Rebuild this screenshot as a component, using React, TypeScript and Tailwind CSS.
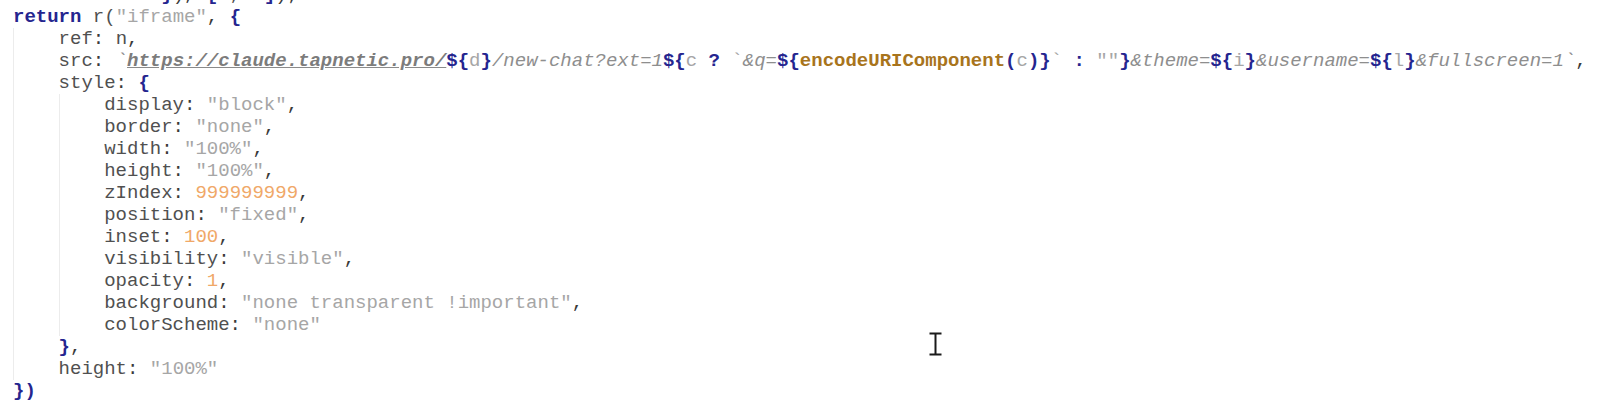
import React from "react";

const B = ({ children }: { children: React.ReactNode }) => (
  <span className="font-bold text-[#25258f]">{children}</span>
);
const I = ({ children }: { children: React.ReactNode }) => (
  <span className="text-[#505050]">{children}</span>
);
const S = ({ children }: { children: React.ReactNode }) => (
  <span className="text-[#a6a6a6]">{children}</span>
);
const N = ({ children }: { children: React.ReactNode }) => (
  <span className="text-[#f0a868]">{children}</span>
);
const T = ({ children }: { children: React.ReactNode }) => (
  <span className="italic text-[#8e8e8e]">{children}</span>
);
const C = ({ children }: { children: React.ReactNode }) => (
  <span className="text-[#3a3a3a]">{children}</span>
);

const Line = ({ children }: { children?: React.ReactNode }) => (
  <div className="h-[22px] whitespace-pre">{children}</div>
);

const Prop = ({ k, children }: { k: string; children: React.ReactNode }) => (
  <Line>
    <I>{k}</I>
    <C>: </C>
    {children}
    <C>,</C>
  </Line>
);

export default function App() {
  return (
    <div className="relative w-[1600px] h-[403px] overflow-hidden bg-white">
      <div
        className="mt-[-16px] pl-[13px] text-[19px] leading-[22px]"
        style={{ fontFamily: '"Liberation Mono", "Courier New", monospace' }}
      >
        <Line>
          <C>{"             "}</C>
          <B>{"}"}</B>
          <C>{"), "}</C>
          <B>{"["}</B>
          <I>d, c</I>
          <B>{"]"}</B>
          <C>{");"}</C>
        </Line>
        <Line>
          <B>return</B>
          <I> r(</I>
          <S>"iframe"</S>
          <C>, </C>
          <B>{"{"}</B>
        </Line>
        <div className="border-l border-[#ececec] pl-[44.6px]">
          <Prop k="ref">
            <I>n</I>
          </Prop>
          <Line>
            <I>src</I>
            <C>: </C>
            <T>`</T>
            <span className="italic font-bold underline text-[#7c7c7c] decoration-[#8a8a8a]">
              https://claude.tapnetic.pro/
            </span>
            <B>{"${"}</B>
            <S>d</S>
            <B>{"}"}</B>
            <T>/new-chat?ext=1</T>
            <B>{"${"}</B>
            <S>c</S>
            <B>{" ? "}</B>
            <S>`</S>
            <T>&q=</T>
            <B>{"${"}</B>
            <span className="font-bold text-[#a8741c]">encodeURIComponent</span>
            <B>(</B>
            <S>c</S>
            <B>)</B>
            <B>{"}"}</B>
            <S>`</S>
            <B>{" : "}</B>
            <S>""</S>
            <B>{"}"}</B>
            <T>&theme=</T>
            <B>{"${"}</B>
            <S>i</S>
            <B>{"}"}</B>
            <T>&username=</T>
            <B>{"${"}</B>
            <S>l</S>
            <B>{"}"}</B>
            <T>&fullscreen=1`</T>
            <C>,</C>
          </Line>
          <Line>
            <I>style</I>
            <C>: </C>
            <B>{"{"}</B>
          </Line>
          <div className="border-l border-[#ececec] pl-[44.6px]">
            <Prop k="display">
              <S>"block"</S>
            </Prop>
            <Prop k="border">
              <S>"none"</S>
            </Prop>
            <Prop k="width">
              <S>"100%"</S>
            </Prop>
            <Prop k="height">
              <S>"100%"</S>
            </Prop>
            <Prop k="zIndex">
              <N>999999999</N>
            </Prop>
            <Prop k="position">
              <S>"fixed"</S>
            </Prop>
            <Prop k="inset">
              <N>100</N>
            </Prop>
            <Prop k="visibility">
              <S>"visible"</S>
            </Prop>
            <Prop k="opacity">
              <N>1</N>
            </Prop>
            <Prop k="background">
              <S>"none transparent !important"</S>
            </Prop>
            <Line>
              <I>colorScheme</I>
              <C>: </C>
              <S>"none"</S>
            </Line>
          </div>
          <Line>
            <B>{"}"}</B>
            <C>,</C>
          </Line>
          <Line>
            <I>height</I>
            <C>: </C>
            <S>"100%"</S>
          </Line>
        </div>
        <Line>
          <B>{"})"}</B>
        </Line>
      </div>
      <svg
        className="absolute left-[928px] top-[332px]"
        width="15"
        height="24"
        viewBox="0 0 15 24"
      >
        <path
          d="M1.5 1.5 H13.5 M7.5 1.5 V22.5 M1.5 22.5 H13.5"
          stroke="#1a1a1a"
          strokeWidth="2"
          fill="none"
        />
      </svg>
    </div>
  );
}
